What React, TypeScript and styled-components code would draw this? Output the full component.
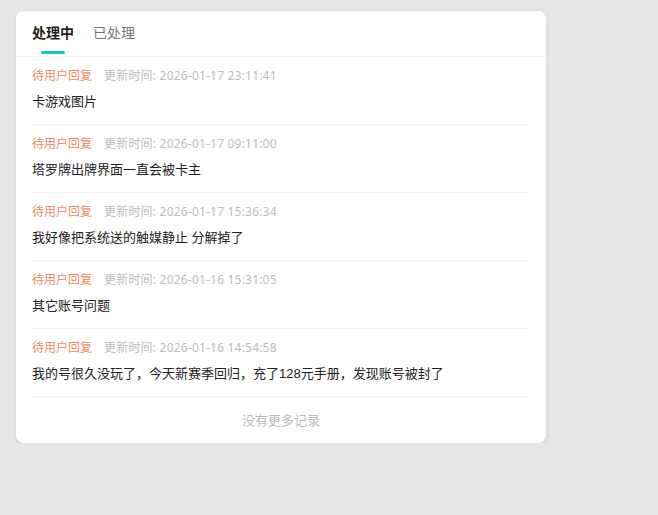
import React, { useState } from "react";
import styled, { createGlobalStyle } from "styled-components";

const Global = createGlobalStyle`
  html, body { margin: 0; padding: 0; background: #e6e6e6; }
  body { font-family: "Liberation Sans", "Noto Sans CJK SC", sans-serif; }
`;

const Page = styled.div`
  padding: 11px 0 0 16px;
`;

const Card = styled.div`
  width: 530px;
  background: #fff;
  border-radius: 8px;
  box-shadow: 0 2px 4px rgba(0, 0, 0, 0.1);
  overflow: hidden;
`;

const TabBar = styled.div`
  display: flex;
  gap: 19px;
  height: 45px;
  padding: 0 16px;
  border-bottom: 1px solid #f2f2f2;
`;

const Tab = styled.div<{ $active: boolean }>`
  position: relative;
  padding-top: 12px;
  font-size: 14px;
  line-height: 20px;
  color: ${(p) => (p.$active ? "#222" : "#777")};
  font-weight: ${(p) => (p.$active ? 700 : 400)};
  cursor: pointer;
`;

const Underline = styled.span`
  position: absolute;
  left: 50%;
  bottom: 2px;
  width: 24px;
  height: 3px;
  margin-left: -12px;
  border-radius: 2px;
  background: #19c6b8;
`;

const List = styled.div`
  padding: 0 16px;
`;

const Item = styled.div`
  padding: 10px 0 12px;
  border-bottom: 1px solid #f2f2f2;
`;

const Meta = styled.div`
  display: flex;
  gap: 12px;
  font-size: 12px;
  line-height: 18px;
`;

const Status = styled.span`
  color: #ee8a62;
`;

const Time = styled.span`
  font-family: "Noto Sans", "Noto Sans CJK SC", sans-serif;
  letter-spacing: 0.2px;
  color: #bbbbbb;
`;

const Title = styled.div`
  margin-top: 7px;
  font-size: 13px;
  line-height: 20px;
  color: #222;
`;

const Footer = styled.div`
  padding: 14px 0 12px;
  text-align: center;
  font-size: 13px;
  line-height: 20px;
  color: #bbb;
`;

const items = [
  { time: "2026-01-17 23:11:41", title: "卡游戏图片" },
  { time: "2026-01-17 09:11:00", title: "塔罗牌出牌界面一直会被卡主" },
  { time: "2026-01-17 15:36:34", title: "我好像把系统送的触媒静止 分解掉了" },
  { time: "2026-01-16 15:31:05", title: "其它账号问题" },
  { time: "2026-01-16 14:54:58", title: "我的号很久没玩了，今天新赛季回归，充了128元手册，发现账号被封了" },
];

export default function App() {
  const [tab, setTab] = useState(0);
  return (
    <Page>
      <Global />
      <Card>
        <TabBar>
          {["处理中", "已处理"].map((t, i) => (
            <Tab key={t} $active={tab === i} onClick={() => setTab(i)}>
              {t}
              {tab === i && <Underline />}
            </Tab>
          ))}
        </TabBar>
        <List>
          {items.map((it) => (
            <Item key={it.time}>
              <Meta>
                <Status>待用户回复</Status>
                <Time>更新时间: {it.time}</Time>
              </Meta>
              <Title>{it.title}</Title>
            </Item>
          ))}
        </List>
        <Footer>没有更多记录</Footer>
      </Card>
    </Page>
  );
}
